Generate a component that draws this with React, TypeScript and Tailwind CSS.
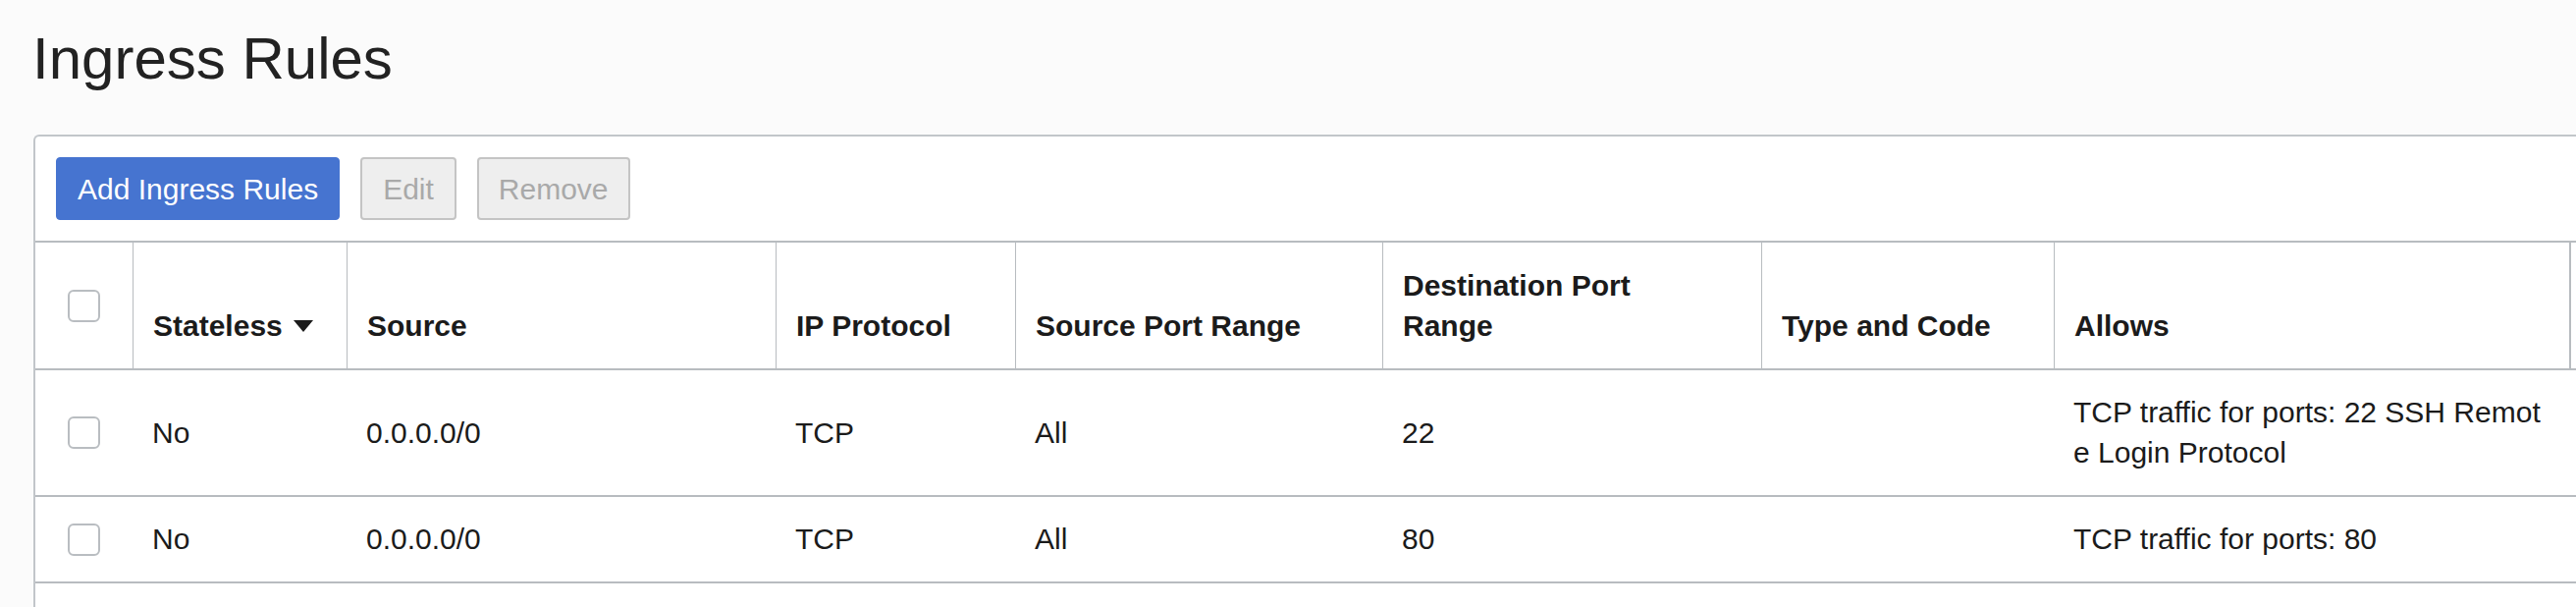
import React from "react";

const font = { fontFamily: '"Liberation Sans", Arial, Helvetica, sans-serif' };

function Checkbox() {
  return (
    <div className="mx-auto h-[33px] w-[33px] rounded-[6px] border-2 border-[#b9bdc1] bg-white" />
  );
}

type Row = {
  stateless: string;
  source: string;
  protocol: string;
  srcPort: string;
  dstPort: string;
  typeCode: string;
  allows: React.ReactNode;
};

const rows: Row[] = [
  {
    stateless: "No",
    source: "0.0.0.0/0",
    protocol: "TCP",
    srcPort: "All",
    dstPort: "22",
    typeCode: "",
    allows: (
      <>
        TCP traffic for ports: 22 SSH Remot
        <br />e Login Protocol
      </>
    ),
  },
  {
    stateless: "No",
    source: "0.0.0.0/0",
    protocol: "TCP",
    srcPort: "All",
    dstPort: "80",
    typeCode: "",
    allows: "TCP traffic for ports: 80",
  },
];

export default function App() {
  const th =
    "border-l border-t-2 border-b-2 border-[#b8bcc0] pl-[20px] pr-[20px] pt-[23px] pb-[23px] text-left align-bottom font-bold";
  const td = "border-b-2 border-[#b8bcc0] pl-[20px] pr-[20px] pt-[22px] pb-[23px] align-middle";
  return (
    <div
      className="h-[618px] w-full overflow-hidden bg-[#fbfbfb] text-[#1b1b1b]"
      style={font}
    >
      <h1 className="pl-[33px] pt-[24px] text-[60px] font-normal leading-[72px] text-[#222222]">
        Ingress Rules
      </h1>
      <div className="ml-[34px] mt-[41px] w-max rounded-tl-[6px] border-l-2 border-t-2 border-[#c2c6ca] bg-white">
        <div className="flex gap-[21px] pb-[21px] pl-[21px] pt-[21px]">
          <button className="h-[64px] rounded-[4px] border border-[#4674d0] bg-[#4674d0] px-[21px] text-[30px] leading-[41px] text-white">
            Add Ingress Rules
          </button>
          <button className="h-[64px] rounded-[4px] border-2 border-[#c4c4c4] bg-[#eeeeee] px-[21px] text-[30px] leading-[41px] text-[#a9a9a9]">
            Edit
          </button>
          <button className="h-[64px] rounded-[4px] border-2 border-[#c4c4c4] bg-[#eeeeee] px-[20px] text-[30px] leading-[41px] text-[#a9a9a9]">
            Remove
          </button>
        </div>
        <table className="table-fixed border-separate border-spacing-0 text-[30px] leading-[41px]">
          <colgroup>
            <col className="w-[99px]" />
            <col className="w-[218px]" />
            <col className="w-[437px]" />
            <col className="w-[244px]" />
            <col className="w-[374px]" />
            <col className="w-[386px]" />
            <col className="w-[298px]" />
            <col className="w-[525px]" />
            <col className="w-[300px]" />
          </colgroup>
          <thead>
            <tr>
              <th className="border-t-2 border-b-2 border-[#b8bcc0] p-0 align-middle">
                <Checkbox />
              </th>
              <th className={th}>
                Stateless
                <svg
                  width="20"
                  height="12"
                  viewBox="0 0 20 12"
                  className="mb-[4px] ml-[11px] inline-block"
                >
                  <path d="M0 0 L20 0 L10 12 Z" fill="#1b1b1b" />
                </svg>
              </th>
              <th className={th}>Source</th>
              <th className={th}>IP Protocol</th>
              <th className={th}>Source Port Range</th>
              <th className={th}>
                Destination Port
                <br />
                Range
              </th>
              <th className={th}>Type and Code</th>
              <th className={th}>Allows</th>
              <th className="border-l-2 border-t-2 border-b-2 border-[#b8bcc0]" />
            </tr>
          </thead>
          <tbody>
            {rows.map((r, i) => (
              <tr key={i}>
                <td className="border-b-2 border-[#b8bcc0] p-0 align-middle">
                  <Checkbox />
                </td>
                <td className={td}>{r.stateless}</td>
                <td className={td}>{r.source}</td>
                <td className={td}>{r.protocol}</td>
                <td className={td}>{r.srcPort}</td>
                <td className={td}>{r.dstPort}</td>
                <td className={td}>{r.typeCode}</td>
                <td className={td}>{r.allows}</td>
                <td className={td} />
              </tr>
            ))}
          </tbody>
        </table>
        <div className="h-[80px]" />
      </div>
    </div>
  );
}
